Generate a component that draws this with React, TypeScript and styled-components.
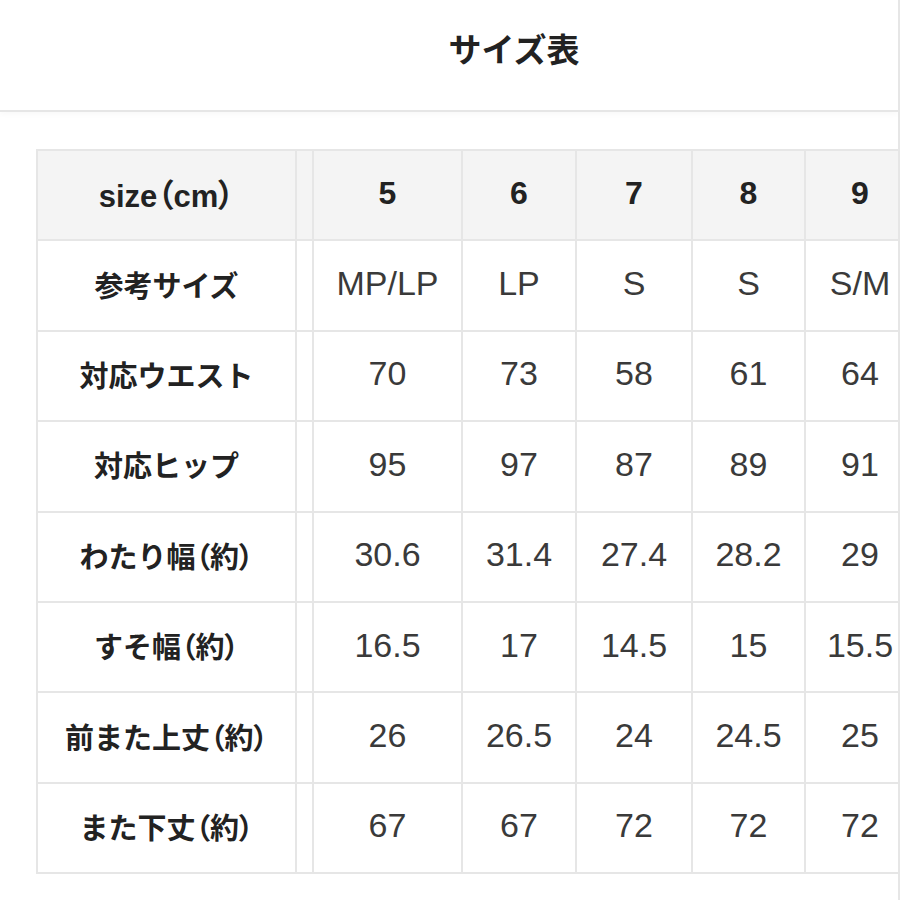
import styled, { createGlobalStyle } from "styled-components";

const GlobalStyle = createGlobalStyle`
  html, body {
    margin: 0;
    padding: 0;
    background: #ffffff;
  }
  body {
    font-family: "Liberation Sans", "Noto Sans CJK JP", sans-serif;
    color: #222;
  }
`;

const StyledPage = styled.div`
  width: 898px;
  height: 900px;
  border-right: 2px solid #e6e6e6;
  overflow: hidden;
  background: #ffffff;
`;

const StyledHeader = styled.header`
  height: 112px;
  display: flex;
  align-items: center;
  justify-content: center;
  padding-left: 130px;
  padding-bottom: 14px;
  box-sizing: border-box;
  border-bottom: 2px solid #e6e6e6;
  box-shadow: 0 3px 5px rgba(0, 0, 0, 0.025);
`;

const StyledTitle = styled.h1`
  margin: 0;
  font-family: "Noto Sans CJK JP", sans-serif;
  font-weight: 700;
  font-size: 33px;
  color: #222;
`;

const StyledTableWrap = styled.div`
  padding: 37px 0 0 36px;
`;

const StyledTable = styled.table`
  border-collapse: collapse;
  table-layout: fixed;
  width: 878px;
`;

const StyledRow = styled.tr<{ $head?: boolean }>`
  background: ${(p) => (p.$head ? "#f4f4f4" : "#ffffff")};
`;

const StyledCell = styled.td<{ $kind: "label" | "head" | "value" | "gap" }>`
  height: 84.4px;
  padding: 0 0 4px;
  border: 2px solid #e6e6e6;
  text-align: center;
  vertical-align: middle;
  white-space: nowrap;
  overflow: visible;
  font-family: ${(p) =>
    p.$kind === "label"
      ? `"Noto Sans CJK JP", sans-serif`
      : `"Liberation Sans", "Noto Sans CJK JP", sans-serif`};
  font-weight: ${(p) => (p.$kind === "value" ? 400 : 700)};
  font-size: ${(p) =>
    p.$kind === "label" ? "29px" : p.$kind === "head" ? "32px" : "34px"};
  color: ${(p) => (p.$kind === "value" ? "#3a3a3a" : "#222")};
`;

const StyledParen = styled.span`
  font-family: "Noto Sans CJK JP", sans-serif;
  font-feature-settings: "palt";
`;

const StyledHeadLabel = styled.span`
  font-family: "Liberation Sans", sans-serif;
  font-size: 31px;
`;

const sizes = ["5", "6", "7", "8", "9"];

const rows: { label: string; values: string[] }[] = [
  { label: "参考サイズ", values: ["MP/LP", "LP", "S", "S", "S/M"] },
  { label: "対応ウエスト", values: ["70", "73", "58", "61", "64"] },
  { label: "対応ヒップ", values: ["95", "97", "87", "89", "91"] },
  { label: "わたり幅（約）", values: ["30.6", "31.4", "27.4", "28.2", "29"] },
  { label: "すそ幅（約）", values: ["16.5", "17", "14.5", "15", "15.5"] },
  { label: "前また上丈（約）", values: ["26", "26.5", "24", "24.5", "25"] },
  { label: "また下丈（約）", values: ["67", "67", "72", "72", "72"] },
];

const colWidths = [259, 17, 149, 114, 116, 113, 110];

function withParens(text: string) {
  return text.split(/([（）])/).map((part, i) =>
    part === "（" || part === "）" ? (
      <StyledParen key={i}>{part}</StyledParen>
    ) : (
      part
    )
  );
}

export default function App() {
  return (
    <>
      <GlobalStyle />
      <StyledPage>
        <StyledHeader>
          <StyledTitle>サイズ表</StyledTitle>
        </StyledHeader>

        <StyledTableWrap>
          <StyledTable>
            <colgroup>
              {colWidths.map((w, i) => (
                <col key={i} style={{ width: w }} />
              ))}
            </colgroup>
            <tbody>
              <StyledRow $head>
                <StyledCell $kind="head">
                  <StyledHeadLabel>size</StyledHeadLabel>
                  <StyledParen>（</StyledParen>
                  <StyledHeadLabel>cm</StyledHeadLabel>
                  <StyledParen>）</StyledParen>
                </StyledCell>
                <StyledCell $kind="gap" />
                {sizes.map((s) => (
                  <StyledCell key={s} $kind="head">
                    {s}
                  </StyledCell>
                ))}
              </StyledRow>

              {rows.map((row) => (
                <StyledRow key={row.label}>
                  <StyledCell $kind="label">{withParens(row.label)}</StyledCell>
                  <StyledCell $kind="gap" />
                  {row.values.map((v, i) => (
                    <StyledCell key={i} $kind="value">
                      {v}
                    </StyledCell>
                  ))}
                </StyledRow>
              ))}
            </tbody>
          </StyledTable>
        </StyledTableWrap>
      </StyledPage>
    </>
  );
}
